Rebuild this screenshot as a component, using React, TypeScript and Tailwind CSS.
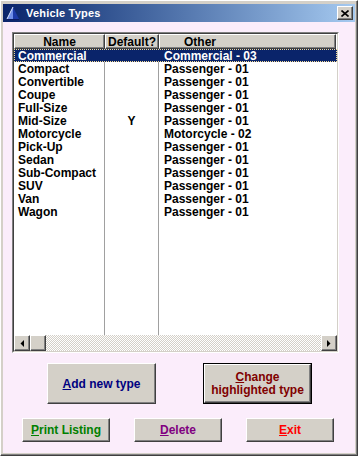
import React from "react";

const rows: [string, string, string][] = [
  ["Commercial", "", "Commercial - 03"],
  ["Compact", "", "Passenger - 01"],
  ["Convertible", "", "Passenger - 01"],
  ["Coupe", "", "Passenger - 01"],
  ["Full-Size", "", "Passenger - 01"],
  ["Mid-Size", "Y", "Passenger - 01"],
  ["Motorcycle", "", "Motorcycle - 02"],
  ["Pick-Up", "", "Passenger - 01"],
  ["Sedan", "", "Passenger - 01"],
  ["Sub-Compact", "", "Passenger - 01"],
  ["SUV", "", "Passenger - 01"],
  ["Van", "", "Passenger - 01"],
  ["Wagon", "", "Passenger - 01"],
];

const raised =
  "bg-[#d4d0c8] border border-t-white border-l-white border-r-[#404040] border-b-[#404040] shadow-[inset_-1px_-1px_0_#808080]";

function Btn({
  first,
  rest,
  color,
  className,
}: {
  first: string;
  rest: string;
  color: string;
  className: string;
}) {
  return (
    <div className={`${raised} ${className} flex items-center justify-center text-[12px] font-bold ${color}`}>
      <span>
        <span className="underline underline-offset-1">{first}</span>
        {rest}
      </span>
    </div>
  );
}

export default function App() {
  return (
    <div className="w-[358px] h-[456px] bg-[#d4d0c8] font-['Liberation_Sans',Arial,sans-serif] overflow-hidden">
      <div className="w-[358px] h-[456px] border-t border-l border-t-white border-l-white border-r border-b border-r-[#404040] border-b-[#404040] shadow-[inset_-1px_-1px_0_#808080] pt-[3px] px-[2px] pb-[2px] flex flex-col">
        {/* Title bar */}
        <div className="h-[18px] flex items-center bg-linear-to-r from-[#0a246a] to-[#a6caf0] pl-[3px] pr-[2px] shrink-0">
          <svg width="14" height="13" viewBox="0 0 14 13" className="mr-[6px]">
            <polygon points="7,0 1,12 7,12" fill="#6f8ee8" />
            <polygon points="7,0 13,12 7,12" fill="#1c3aa8" />
            <polyline points="7,0 1,12" stroke="#dfe8ff" strokeWidth="1" fill="none" />
            <line x1="1" y1="12.5" x2="13" y2="12.5" stroke="#0a1a60" strokeWidth="1" />
          </svg>
          <span className="text-white font-bold text-[11px] tracking-[0.2px] flex-1">Vehicle Types</span>
          <div className={`${raised} w-[16px] h-[14px] flex items-center justify-center`}>
            <svg width="8" height="7" viewBox="0 0 8 7">
              <path d="M0.5 0.5 L7.5 6.5 M7.5 0.5 L0.5 6.5" stroke="#000" strokeWidth="1.6" />
            </svg>
          </div>
        </div>

        {/* Client area */}
        <div className="flex-1 bg-[#fbedfb] flex flex-col pt-[10px]">
          {/* List view */}
          <div className="ml-[9px] w-[327px] h-[321px] border border-t-[#808080] border-l-[#808080] border-r-white border-b-white">
            <div className="h-full border border-t-[#404040] border-l-[#404040] border-r-[#d4d0c8] border-b-[#d4d0c8] bg-white flex flex-col text-[12px] font-bold">
              {/* Header */}
              <div className="h-[15px] flex shrink-0 leading-[14px]">
                <div className={`${raised} w-[91px] text-center`}>Name</div>
                <div className={`${raised} w-[54px] text-center`}>Default?</div>
                <div className={`${raised} w-[177px] pl-[24px]`}>Other</div>
              </div>
              {/* Body */}
              <div className="flex-1 flex flex-col">
                {rows.map((r, i) => {
                  const sel = i === 0;
                  return (
                    <div
                      key={i}
                      className={`h-[13px] flex leading-[13px] ${
                        sel
                          ? "bg-[#0a246a] text-white outline-1 outline-dotted outline-[#f5db95] -outline-offset-1"
                          : "text-black"
                      }`}
                    >
                      <div className={`w-[91px] pl-[4px] pt-[1px] ${sel ? "" : "border-r border-[#a0a0a0]"}`}>{r[0]}</div>
                      <div className={`w-[54px] text-center pt-[1px] ${sel ? "" : "border-r border-[#a0a0a0]"}`}>{r[1]}</div>
                      <div className="flex-1 pl-[5px] pt-[1px]">{r[2]}</div>
                    </div>
                  );
                })}
                <div className="flex-1 flex">
                  <div className="w-[91px] border-r border-[#a0a0a0]" />
                  <div className="w-[54px] border-r border-[#a0a0a0]" />
                  <div className="flex-1" />
                </div>
              </div>
              {/* Horizontal scrollbar */}
              <div className="h-[16px] flex shrink-0">
                <div className={`${raised} w-[16px] h-[16px] flex items-center justify-center`}>
                  <svg width="4" height="7" viewBox="0 0 4 7">
                    <polygon points="4,0 4,7 0.5,3.5" fill="#000" />
                  </svg>
                </div>
                <div className={`${raised} w-[16px] h-[16px]`} />
                <div className="flex-1 bg-[conic-gradient(#ffffff_25%,#d4d0c8_0_50%,#ffffff_0_75%,#d4d0c8_0)] bg-size-[2px_2px]" />
                <div className={`${raised} w-[16px] h-[16px] flex items-center justify-center`}>
                  <svg width="4" height="7" viewBox="0 0 4 7">
                    <polygon points="0,0 0,7 3.5,3.5" fill="#000" />
                  </svg>
                </div>
              </div>
            </div>
          </div>

          {/* Buttons row 1 */}
          <div className="flex mt-[10px] pl-[44px] gap-[47px]">
            <Btn first="A" rest="dd new type" color="text-[#000080]" className="w-[109px] h-[41px]" />
            <div className="w-[109px] h-[41px] border border-black">
              <div className={`${raised} w-full h-full flex items-center justify-center text-center text-[12px] font-bold text-[#800000] leading-[13px]`}>
                <span>
                  <span className="underline underline-offset-1">C</span>hange
                  <br />
                  highlighted type
                </span>
              </div>
            </div>
          </div>

          {/* Buttons row 2 */}
          <div className="flex mt-[14px] pl-[19px] gap-[24px]">
            <Btn first="P" rest="rint Listing" color="text-[#008000]" className="w-[88px] h-[24px]" />
            <Btn first="D" rest="elete" color="text-[#800080]" className="w-[88px] h-[24px]" />
            <Btn first="E" rest="xit" color="text-[#ff0000]" className="w-[88px] h-[24px]" />
          </div>
        </div>
      </div>
    </div>
  );
}
